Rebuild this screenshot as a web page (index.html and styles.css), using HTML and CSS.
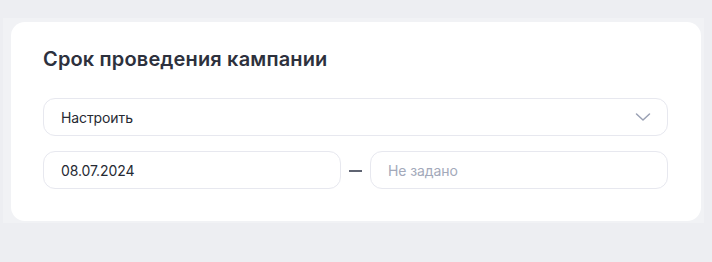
FILE: index.html
```html
<!DOCTYPE html>
<html lang="ru">
<head>
<meta charset="utf-8">
<link rel="stylesheet" href="styles.css">
</head>
<body>
<div class="wrap">
  <section class="card">
    <h2 class="title">Срок проведения кампании</h2>
    <div class="select">
      <span class="select-text">Настроить</span>
      <svg class="chev" width="16" height="10" viewBox="0 0 16 10"><path d="M1.5 2l6.5 6 6.5-6" fill="none" stroke="#9aa1b4" stroke-width="1.5" stroke-linecap="round" stroke-linejoin="round"/></svg>
    </div>
    <div class="dates">
      <div class="field"><span class="value">08.07.2024</span></div>
      <span class="dash"></span>
      <div class="field"><span class="placeholder">Не задано</span></div>
    </div>
  </section>
</div>
</body>
</html>
```
FILE: styles.css
```css
html, body {
  margin: 0;
  padding: 0;
  background: #edeef2;
  font-family: Inter, "Noto Sans", sans-serif;
}
.wrap {
  margin: 18px 0 0 3px;
  width: 701px;
  height: 205px;
  box-sizing: border-box;
  padding: 4px 3px 2px 8px;
  background: #f1f2f5;
}
.card {
  background: #ffffff;
  border-radius: 14px;
  height: 199px;
  box-sizing: border-box;
  padding: 25px 32px 0 32px;
}
.title {
  margin: 0;
  font-size: 20px;
  line-height: 24px;
  font-weight: 600;
  color: #2d313d;
  letter-spacing: 0.15px;
}
.select {
  margin-top: 27px;
  height: 38px;
  width: 625px;
  box-sizing: border-box;
  border: 1px solid #e7e8ef;
  border-radius: 12px;
  display: flex;
  align-items: center;
  justify-content: space-between;
  padding: 0 16px 0 17px;
}
.select-text, .value {
  font-size: 14px;
  color: #262a33;
  letter-spacing: -0.1px;
}
.chev { display: block; }
.dates {
  margin-top: 15px;
  width: 625px;
  display: flex;
  align-items: center;
  gap: 8px;
}
.field {
  flex: 1;
  height: 38px;
  box-sizing: border-box;
  border: 1px solid #e7e8ef;
  border-radius: 12px;
  display: flex;
  align-items: center;
  padding: 0 17px;
}
.dash {
  width: 13px;
  height: 1.5px;
  background: #5f6472;
  margin-top: 2px;
}
.placeholder {
  font-size: 14px;
  color: #a3a9ba;
  letter-spacing: -0.1px;
}
```
